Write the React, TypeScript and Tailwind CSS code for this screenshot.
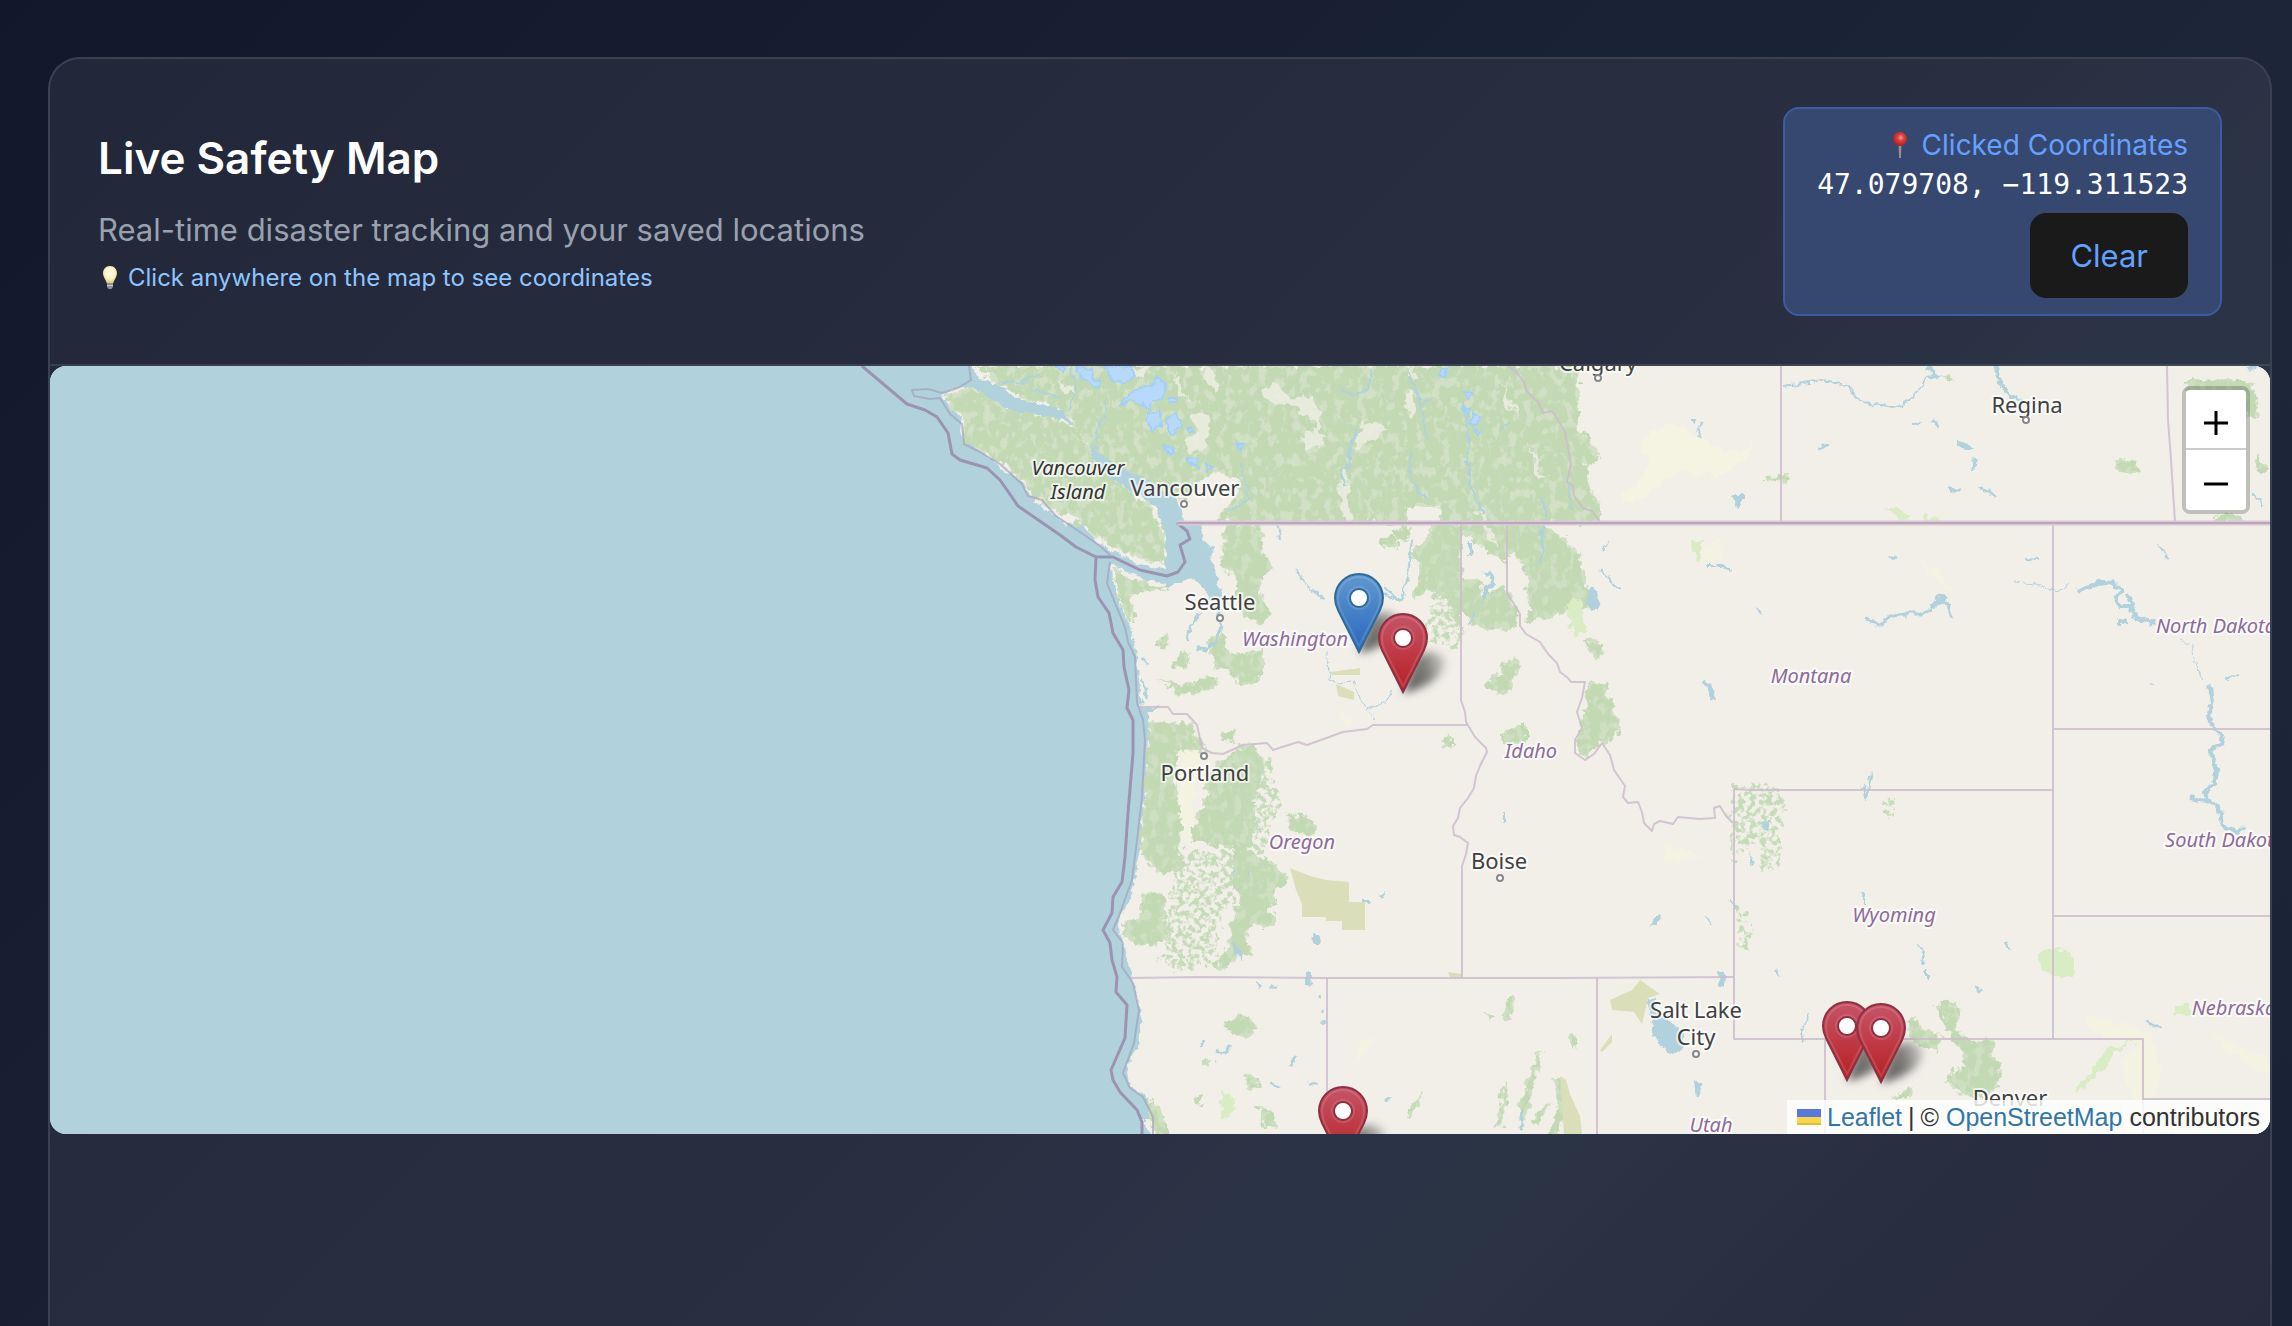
import React from "react";

type Label = { x: number; y: number; text: string };

const CITIES: (Label & { dot?: [number, number] })[] = [
  { x: 1185, y: 496, text: "Vancouver", dot: [1184, 504] },
  { x: 1220, y: 610, text: "Seattle", dot: [1220, 618] },
  { x: 1598, y: 371, text: "Calgary", dot: [1598, 378] },
  { x: 2027, y: 413, text: "Regina", dot: [2026, 420] },
  { x: 1205, y: 781, text: "Portland", dot: [1204, 756] },
  { x: 1499, y: 869, text: "Boise", dot: [1500, 878] },
  { x: 1696, y: 1018, text: "Salt Lake" },
  { x: 1696, y: 1045, text: "City", dot: [1696, 1054] },
  { x: 2010, y: 1106, text: "Denver" },
];

const STATES: Label[] = [
  { x: 1295, y: 646, text: "Washington" },
  { x: 1811, y: 683, text: "Montana" },
  { x: 2216, y: 633, text: "North Dakota" },
  { x: 2225, y: 847, text: "South Dakota" },
  { x: 1531, y: 758, text: "Idaho" },
  { x: 1302, y: 849, text: "Oregon" },
  { x: 1894, y: 922, text: "Wyoming" },
  { x: 1711, y: 1132, text: "Utah" },
  { x: 2234, y: 1015, text: "Nebraska" },
];

const MAINLAND =
  "M972 366 980 380 1000 385 1012 396 1024 400 1045 404 1062 410 1074 424 1086 440 1098 458 1112 470 1128 482 1150 496 1172 504 1180 514 1184 522 1200 524 1203 540 1212 552 1208 570 1212 584 1222 596 1210 600 1200 584 1190 578 1170 586 1148 580 1128 572 1112 564 1113 580 1117 597 1124 612 1130 627 1134 642 1137 657 1139 680 1142 708 1160 706 1148 714 1148 730 1147 767 1143 810 1140 847 1136 868 1133 887 1128 902 1122 917 1119 930 1125 947 1128 962 1131 975 1135 987 1138 1000 1141 1013 1138 1047 1130 1060 1126 1073 1128 1084 1136 1090 1147 1098 1153 1112 1154 1134H2270V366Z";

const ISLAND =
  "M940 396 956 388 972 386 988 398 1004 408 1022 414 1056 418 1080 430 1092 452 1104 470 1118 484 1140 496 1156 508 1164 530 1166 550 1165 568 1150 567 1130 560 1110 551 1094 540 1086 528 1076 522 1066 526 1052 512 1040 506 1028 494 1024 484 1014 476 1002 470 994 460 980 450 966 444 962 434 963 420 952 408Z";

const NORTH_WOODS = [
  "M944 396 970 388 990 400 1022 414 1056 419 1080 432 1096 460 1118 485 1150 505 1162 530 1164 562 1130 555 1100 540 1076 518 1052 508 1026 488 1010 470 984 450 966 440 962 420Z",
  "M976 366H1578V432L1588 434 1600 455 1585 467 1590 490 1600 503V522H1440V506H1405V522H1215L1235 500 1240 480 1215 470 1180 500 1130 482 1098 456 1074 424 1062 408 1020 398Z",
];

const FORESTS = [
  // Washington
  "M1223 524 1260 526 1263 557 1272 565 1257 590 1270 613 1262 622 1242 616 1236 576 1222 566Z",
  "M1114 568 1130 578 1150 584 1170 590 1140 590 1128 600 1136 616 1128 622 1120 600Z",
  "M1180 652 1190 655 1186 670 1174 664ZM1208 640 1222 632 1228 655 1262 650 1260 680 1240 686 1226 666 1216 670ZM1160 635 1168 633 1166 648 1157 648ZM1156 680 1178 688 1206 676 1218 680 1212 690 1180 694Z",
  "M1396 530 1408 526 1408 540 1396 538ZM1380 538 1396 538 1396 548 1382 548Z",
  "M1433 524H1461V640L1455 620 1448 600 1430 590 1414 600 1420 570 1412 550 1428 540Z",
  "M1461 524H1507V562L1490 554 1484 545 1474 544 1474 534 1461 534Z",
  "M1507 524H1540L1560 537 1576 550 1582 570 1588 590 1592 610 1572 606 1556 618 1538 616 1530 606 1527 590 1532 582 1522 560 1507 552Z",
  "M1461 582 1478 580 1482 600 1500 588 1507 594 1516 606 1520 620 1512 630 1486 628 1474 622 1461 610ZM1526 612 1534 612 1532 622 1524 620Z",
  "M1487 680 1502 676 1504 664 1516 658 1518 664 1510 680 1512 692 1496 694 1488 686Z",
  // Idaho and the Montana border
  "M1589 682 1608 682 1610 702 1620 728 1612 740 1600 742 1586 758 1576 752 1582 722Z",
  "M1503 735 1510 728 1526 728 1526 740 1514 745 1503 742ZM1443 740 1450 738 1450 746 1442 744Z",
  "M1586 640 1598 642 1603 650 1598 660 1590 650Z",
  // Oregon
  "M1148 722 1190 724 1198 740 1206 752 1176 750 1176 790 1182 820 1178 850 1182 868 1166 874 1146 862 1140 845 1145 800Z",
  "M1228 756 1248 746 1264 760 1262 780 1254 800 1254 830 1248 850 1268 862 1290 876 1274 890 1274 904 1264 908 1274 914 1274 926 1256 926 1240 930 1240 900 1232 880 1236 846 1218 846 1190 838 1196 820 1204 806 1208 780Z",
  "M1144 892 1166 896 1164 920 1170 942 1146 946 1130 940 1124 924 1142 914Z",
  "M1288 818 1302 816 1318 824 1316 836 1304 836 1290 826ZM1222 730 1236 734 1234 740 1220 738Z",
  "M1236 908 1244 908 1246 940 1252 956 1240 950 1222 970 1214 968 1228 946Z",
  // Northern California
  "M1226 1024 1240 1012 1252 1022 1256 1030 1246 1038 1228 1030ZM1202 1060 1214 1060 1204 1068ZM1244 1074 1264 1082 1254 1088 1246 1084ZM1258 1106 1268 1108 1276 1126 1262 1124ZM1196 1096 1204 1094 1200 1106 1194 1104ZM1148 1098 1158 1110 1170 1134H1156Z",
  // Nevada and Utah ranges
  "M1508 998 1514 998 1512 1020 1506 1018ZM1484 1012 1498 1020 1490 1020ZM1536 1060 1542 1050 1532 1090 1524 1124 1520 1100ZM1408 1110 1424 1092 1426 1088 1418 1104 1408 1120ZM1502 1090 1506 1084 1504 1120 1496 1130ZM1554 1080 1562 1076 1566 1100 1560 1134H1550L1560 1104ZM1544 1106 1550 1100 1540 1124 1532 1122ZM1570 1034 1576 1036 1573 1050Z",
  // Colorado Rockies
  "M1936 1004 1956 1002 1960 1014 1956 1030 1964 1038 1972 1042 1992 1040 1994 1048 1990 1056 2000 1064 1998 1084 1990 1096H1968L1944 1082 1950 1072 1966 1068 1964 1054 1952 1040Z",
  "M1908 1020 1918 1020 1920 1030 1940 1034 1938 1048 1924 1050 1920 1040 1910 1038ZM1893 1098 1912 1086 1908 1098Z",
  // Saskatchewan and Manitoba
  "M2186 380 2240 380 2252 386 2258 416 2248 418 2240 396 2190 392ZM2216 518 2228 514 2242 518 2240 522H2216ZM2256 458 2268 466 2266 474 2256 470ZM2118 462 2138 462 2138 472 2120 472ZM1942 376 1950 374 1950 382ZM1766 476 1790 478 1788 481 1766 479Z",
];

const SPARSE_WOODS =
  "M1180 850 1234 850 1236 900 1220 910 1216 960 1180 975 1160 960 1170 900ZM1450 540 1461 640 1455 650 1420 640ZM1235 740 1272 760 1280 800 1262 860 1250 840ZM1732 783 1742 786 1780 788 1786 806 1780 826 1780 868 1758 870 1762 850 1740 846 1738 862 1730 858ZM1736 908 1746 912 1750 935 1748 952 1740 948ZM1884 800 1896 798 1896 816 1888 820Z";

const CLEARINGS =
  "M1262 392 1272 380 1290 396 1312 398 1322 412 1316 430 1326 438 1310 452 1304 446 1314 420 1296 408 1272 404ZM1208 366 1222 384 1216 392 1204 376ZM1346 462 1350 520H1342L1340 480ZM1362 424 1356 446 1378 436 1386 430 1374 420ZM1300 440 1322 436 1328 444 1306 452ZM1408 390 1416 400 1414 418 1404 404ZM1412 366 1418 380 1410 376ZM1480 508 1498 548 1490 540 1476 512ZM1184 440 1200 430 1190 410 1210 420 1206 450 1190 456ZM1060 380 1076 392 1062 392ZM1176 374 1190 400 1180 398ZM1500 380 1520 420 1510 410ZM1530 440 1546 480 1536 470ZM1130 370 1150 366 1142 378Z";

const MEADOWS =
  "M1568 602 1582 598 1586 620 1586 636 1574 634 1568 618ZM1886 508 1898 508 1910 518 1910 522 1900 520ZM1926 512 1940 520V523H1926ZM2040 952 2048 946 2068 948 2072 960 2072 976H2050L2041 966ZM2173 1004 2190 1006 2190 1016H2173ZM1693 540 1702 538 1700 558 1694 554ZM2074 1086 2096 1066 2108 1050 2136 1041 2110 1056 2098 1076 2078 1092ZM1222 1090 1232 1094 1236 1110 1222 1120Z";

const SCRUB =
  "M1290 868 1310 876 1326 880 1349 882 1349 902 1365 902 1365 930 1342 930 1342 921 1326 921 1326 917 1302 917 1302 904 1296 890ZM1610 1000 1632 990 1640 980 1660 994 1648 998 1642 1024 1634 1012 1612 1010ZM1600 1050 1612 1034 1612 1042 1602 1052ZM1330 672 1360 668 1360 675 1332 675ZM1336 684 1354 692 1354 700 1338 696ZM1448 972 1462 974 1462 978H1450ZM1560 1076 1566 1080 1570 1094 1580 1116 1582 1134H1564Z";

const PALE =
  "M1640 440 1664 424 1700 436 1720 452 1752 446 1750 460 1722 470 1716 478 1690 472 1670 476 1640 500 1616 504 1650 468ZM1696 546 1720 544 1722 558 1704 560ZM1664 845 1690 850 1700 855 1686 858 1676 866 1664 858ZM1336 712 1352 716 1348 728ZM1180 740 1200 750 1196 790 1190 850 1176 820 1180 780ZM1354 1060 1364 1040 1372 1042 1368 1052ZM2084 1014 2120 1022 2150 1034 2160 1060 2154 1100 2140 1110 2120 1070 2134 1044 2090 1030ZM2210 1034 2250 1050 2270 1064V1074L2240 1060ZM1920 556 1940 574 1950 590 1936 580Z";

const LAKES =
  "M988 388 1010 398 1022 402 1020 412 1004 408ZM1090 444 1104 456 1126 470 1150 482 1178 498 1182 516 1172 518 1160 504 1132 490 1110 478 1092 458ZM1180 524 1196 524 1204 550 1214 546 1212 560 1220 590 1226 606 1214 596 1204 576 1196 572 1190 580 1176 578 1170 566 1184 570 1190 560 1182 546 1192 536ZM1647 1000 1656 998 1656 1012 1668 1020 1684 1034 1684 1048 1674 1056 1664 1048 1654 1036ZM1590 586 1597 590 1599 610 1592 612 1586 602ZM1694 1080 1704 1086 1696 1098ZM1718 972 1725 974 1724 987 1719 984ZM1760 822 1770 818 1770 832 1762 830ZM1955 440 1970 444 1974 450 1964 450ZM1304 974 1312 974 1311 988 1304 986ZM1232 942 1240 950 1244 962 1234 952ZM1313 934 1320 934 1318 944 1314 944ZM1656 916 1660 914 1662 920 1650 928ZM1732 494 1742 494 1742 504 1736 508ZM1691 418 1696 418 1695 426ZM2244 366H2256L2252 373ZM1750 852 1754 862 1750 866ZM1363 900H1370V903H1363ZM1378 896 1386 892 1384 898Z";

const RIVERS = [
  { d: "M1296 570 1304 584 1316 592 1324 600", w: 2 },
  { d: "M1278 524 1280 540", w: 2 },
  { d: "M1356 430 1350 450 1349 466 1340 472 1346 486", w: 3 },
  { d: "M1372 370 1368 390 1352 396 1342 390M1408 372 1420 400 1424 420 1426 440M1424 404 1430 398", w: 2 },
  { d: "M1464 400 1468 440 1468 475 1476 500 1484 512M1412 450 1410 470 1416 490 1430 500", w: 2 },
  { d: "M1542 498 1546 520 1540 536 1544 550 1540 562", w: 2 },
  { d: "M1413 540 1410 560 1406 584 1402 600 1390 598 1384 594", w: 2 },
  { d: "M1484 574 1490 572 1494 582 1486 590 1486 600M1470 540 1470 554", w: 4 },
  { d: "M1476 610 1470 624M1600 570 1612 582 1618 590M1602 552 1610 542", w: 2 },
  { d: "M1326 652 1330 680 1340 684 1352 680 1360 700 1372 716 1374 722M1366 710 1380 704 1392 690 1384 702", w: 1 },
  { d: "M1704 682 1712 692 1714 700", w: 4 },
  { d: "M1784 386 1822 380 1846 385 1862 402 1878 404 1896 408 1912 398 1920 388 1926 378 1938 374 1928 366", w: 2 },
  { d: "M1926 368 1940 378M1996 366 2000 384 2010 396 2022 400", w: 3 },
  { d: "M1975 458 1974 472M1980 488 1990 492 1996 498M1950 490H1960M1912 422 1918 424M1932 420 1938 428M1820 448 1826 444M1890 558 1896 556", w: 3 },
  { d: "M1866 618 1876 622 1878 628 1890 616 1900 614 1922 614 1932 606 1940 594 1950 610 1952 620", w: 3 },
  { d: "M1932 608 1946 596", w: 6 },
  { d: "M2076 591 2090 586 2104 582 2114 584 2122 592 2116 598 2120 606 2132 606 2134 616 2148 622 2156 624M2128 594 2132 604 2130 612M2116 622H2128", w: 4 },
  { d: "M2014 582 2036 584 2058 592 2070 584", w: 1 },
  { d: "M2180 640 2192 644 2196 664 2202 680", w: 1 },
  { d: "M2210 684 2212 704 2208 716 2212 726 2220 732 2223 744 2210 750 2216 770 2214 786 2206 790 2208 800 2220 808 2222 826M2190 798 2208 802M2222 826 2236 832 2246 826", w: 4 },
  { d: "M2225 680 2238 674M2158 544 2168 560M2254 494 2264 506M2150 684 2154 685", w: 2 },
  { d: "M1706 566 1722 566 1730 570M1756 608 1764 614M2026 559 2038 560M1698 438 1702 420", w: 2 },
  { d: "M1568 480 1572 510M1918 944 1924 952 1922 964M1926 970 1926 980M1864 892 1864 904M1808 1014 1802 1030 1804 1044M1776 970 1780 976", w: 2 },
  { d: "M1384 586 1400 602M1500 430 1510 422M1504 810 1504 822M1728 900 1736 908M1704 916 1710 924M1863 784 1866 798 1872 774", w: 2 },
  { d: "M1290 1066 1296 1056M1270 1084 1280 1088M1308 1084 1318 1084M1270 986 1278 986M1256 982 1262 988M1216 1050 1224 1054 1232 1046M1200 1048 1204 1040M1320 994V998M1322 1010V1014M1324 1020V1024M1388 1096V1102M1522 1108V1130", w: 3 },
  { d: "M2146 1022 2162 1028M2006 942 2010 948M1976 988 1982 990M1262 800V802M1234 870V874M1248 872V876", w: 3 },
  { d: "M1200 612 1190 628 1188 640M1216 606 1220 622 1218 640 1206 650 1196 648M1142 658 1148 664M1142 678 1147 690 1146 700", w: 3 },
];

const GLACIERS =
  "M1056 366 1066 366 1062 372ZM1076 366 1092 370 1094 378 1102 382 1098 388 1090 384 1080 376ZM1104 366 1130 368 1136 376 1124 384 1112 380ZM1120 402 1132 392 1140 386 1152 388 1156 378 1166 384 1162 398 1154 402 1150 410 1142 404 1130 400 1120 406ZM1146 414 1160 410 1160 426 1152 430 1146 420ZM1168 418 1176 412 1182 426 1174 434 1168 430ZM1164 446 1174 448 1170 456ZM1188 458 1198 460 1198 468 1190 464ZM1206 462 1212 468 1208 472ZM1170 398H1176V402H1170ZM1188 428H1192V432H1188ZM1236 444 1244 446 1240 450ZM1438 374 1448 368 1446 378ZM1462 392 1472 394 1470 400ZM1464 408 1470 410 1468 414ZM1474 414 1480 418 1474 426 1470 422ZM1474 430 1481 432 1478 435Z";

const BORDERS = [
  "M1781 366V522",
  "M2167 366 2168 420 2171 460 2175 522",
  "M1508 366 1516 372 1524 382 1527 392 1538 402 1543 413 1552 411 1558 420 1565 432 1568 448 1571 464 1567 482 1573 486 1574 496 1583 508 1592 511 1600 522",
  "M1461 523V700L1465 712 1466 722 1475 737 1486 748 1487 752 1480 766 1476 776 1474 788 1468 798 1460 808 1458 818 1453 826 1454 835 1460 837 1468 843 1466 854 1462 866V977",
  "M1507 523V593L1514 604 1520 614 1520 626 1526 634 1540 642 1548 654 1557 663 1560 672 1568 678 1571 682 1585 682 1582 698 1577 712 1582 728 1575 740 1575 753 1585 760 1594 754 1602 743 1610 755 1614 770 1625 786 1623 797 1628 803 1638 802 1642 812 1644 823 1652 831 1654 824 1660 821 1673 824 1678 817 1700 819 1715 818 1714 808 1720 806 1726 816 1733 823",
  "M1140 707 1168 707 1173 714 1187 714 1197 725 1202 748 1212 753 1223 754 1243 745 1267 743 1273 750 1298 742 1307 745 1343 732 1367 729 1373 725H1467",
  "M1131 978 1200 977 1320 978 1560 978 1734 977",
  "M1327 978V1134M1597 978V1134",
  "M1734 789V1039H2143V1134M1734 789 1750 790 2053 790M1825 1039V1134",
  "M2053 523V1039M2053 729H2270M2053 916H2270M2143 1099H2270",
];

const OFFSHORE =
  "M862 366 907 404 925 410 937 417 948 433 952 454 960 460 987 468 1000 480 1018 506 1060 535 1076 547 1096 557 1113 557 1140 570 1167 576 1178 572 1185 562 1180 545 1190 539 1187 531 1177 523M1096 557 1095 580 1098 597 1109 613 1113 633 1123 650 1124 667 1129 690 1127 708 1133 720V753L1128 813 1125 857 1122 882 1113 897 1112 913 1103 930 1110 943 1112 960 1117 977 1116 992 1127 1005 1125 1038 1111 1070 1113 1080 1120 1092 1137 1110 1142 1122V1134";

const INSHORE =
  "M969 366 971 380 958 388 942 393 928 389 912 390 914 396 930 399 940 398 950 414 962 424 964 444 980 452 1000 464 1022 484 1028 496 1042 500 1056 516 1080 532 1100 546 1110 555M1110 562 1107 583 1115 603 1125 627 1128 642 1135 657 1137 703 1143 720 1145 740 1142 797 1137 840 1132 880 1120 913 1113 930 1123 943 1122 967 1133 983 1139 1010 1134 1043 1123 1073 1130 1088 1143 1097 1153 1117V1134";

function Pin({ x, y, tone }: { x: number; y: number; tone: "blue" | "red" }) {
  const edge = tone === "blue" ? "#2e6c97" : "#8f2f41";
  return (
    <g transform={`translate(${x} ${y})`}>
      <path
        d="M0 -1 -21 -43C-23 -47 -24 -51 -24 -55A24 24 0 0 1 24 -55C24 -51 23 -47 21 -43Z"
        fill={tone === "blue" ? "url(#pinBlue)" : "url(#pinRed)"}
        stroke={edge}
        strokeWidth="2"
      />
      <path
        d="M0 -7 -19 -44C-20 -48 -21 -51 -21 -55A21 21 0 0 1 21 -55C21 -51 20 -48 19 -44Z"
        fill="none"
        stroke="#fff"
        strokeOpacity="0.13"
        strokeWidth="2"
      />
      <circle cx="0" cy="-55" r="11" fill="none" stroke="#fff" strokeOpacity="0.12" strokeWidth="2" />
      <circle cx="0" cy="-55" r="9" fill="#fff" stroke={edge} strokeWidth="2" />
    </g>
  );
}

function PinShadow({ x, y }: { x: number; y: number }) {
  return (
    <path
      transform={`translate(${x} ${y})`}
      d="M0 0 12 -34C22 -46 44 -42 42 -28 38 -14 20 -4 0 0Z"
      fill="url(#shade)"
      filter="url(#soft)"
    />
  );
}

const PINS: { x: number; y: number; tone: "blue" | "red" }[] = [
  { x: 1359, y: 653, tone: "blue" },
  { x: 1403, y: 693, tone: "red" },
  { x: 1847, y: 1081, tone: "red" },
  { x: 1881, y: 1083, tone: "red" },
  { x: 1343, y: 1166, tone: "red" },
];

function MapCanvas() {
  return (
    <svg
      viewBox="50 366 2220 768"
      preserveAspectRatio="xMidYMid slice"
      className="block h-full w-full font-['Noto_Sans',sans-serif]"
      role="img"
      aria-label="Map of the north-western United States"
    >
      <defs>
        <linearGradient id="pinBlue" x1="0" y1="0" x2="0" y2="1">
          <stop offset="0" stopColor="#6099cf" />
          <stop offset="1" stopColor="#2a66bd" />
        </linearGradient>
        <linearGradient id="pinRed" x1="0" y1="0" x2="0" y2="1">
          <stop offset="0" stopColor="#c65468" />
          <stop offset="1" stopColor="#b71f22" />
        </linearGradient>
        <linearGradient id="shade" x1="0" y1="0.6" x2="1" y2="0.3">
          <stop offset="0" stopColor="#000" stopOpacity="0.6" />
          <stop offset="0.5" stopColor="#000" stopOpacity="0.5" />
          <stop offset="1" stopColor="#000" stopOpacity="0.15" />
        </linearGradient>
        <filter id="soft" x="-50%" y="-50%" width="200%" height="200%">
          <feGaussianBlur stdDeviation="4" />
        </filter>
        <filter id="ragged" filterUnits="userSpaceOnUse" x="850" y="366" width="1420" height="768">
          <feTurbulence type="fractalNoise" baseFrequency="0.09" numOctaves="3" seed="4" result="n" />
          <feDisplacementMap in="SourceGraphic" in2="n" scale="14" xChannelSelector="R" yChannelSelector="G" />
        </filter>
        <filter id="coast" filterUnits="userSpaceOnUse" x="850" y="360" width="1430" height="780">
          <feTurbulence type="fractalNoise" baseFrequency="0.12" numOctaves="3" seed="9" result="n" />
          <feDisplacementMap in="SourceGraphic" in2="n" scale="8" xChannelSelector="R" yChannelSelector="G" />
        </filter>
        <filter id="woods" filterUnits="userSpaceOnUse" x="850" y="366" width="1420" height="768">
          <feTurbulence type="fractalNoise" baseFrequency="0.1" numOctaves="4" seed="7" result="n" />
          <feDisplacementMap in="SourceGraphic" in2="n" scale="16" xChannelSelector="R" yChannelSelector="G" result="shape" />
          <feTurbulence type="fractalNoise" baseFrequency="0.12 0.09" numOctaves="4" seed="12" result="m" />
          <feColorMatrix in="m" type="matrix" values="0 0 0 0 0  0 0 0 0 0  0 0 0 0 0  7 0 0 0 -2.4" result="holes" />
          <feComposite in="shape" in2="holes" operator="in" />
        </filter>
        <filter id="sparse" filterUnits="userSpaceOnUse" x="850" y="366" width="1420" height="768">
          <feTurbulence type="fractalNoise" baseFrequency="0.1" numOctaves="4" seed="3" result="n" />
          <feDisplacementMap in="SourceGraphic" in2="n" scale="16" xChannelSelector="R" yChannelSelector="G" result="shape" />
          <feTurbulence type="fractalNoise" baseFrequency="0.18" numOctaves="3" seed="21" result="m" />
          <feColorMatrix in="m" type="matrix" values="0 0 0 0 0  0 0 0 0 0  0 0 0 0 0  6 0 0 0 -2.6" result="holes" />
          <feComposite in="shape" in2="holes" operator="in" />
        </filter>
        <clipPath id="frame">
          <rect x="50" y="366" width="2220" height="768" />
        </clipPath>
      </defs>
      <g clipPath="url(#frame)">
        <rect x="50" y="366" width="2220" height="768" fill="#b1d2dd" />
        <g fill="#f2efe9" filter="url(#coast)">
          <path d={MAINLAND} />
          <path d={ISLAND} />
          <path d="M1140 1120 2280 1120V1140H1156Z" />
          <path d="M2255 360H2290V1140H2255Z" />
          <path d="M968 352H2280V372H974Z" />
        </g>
        <path d={PALE} fill="#f5f5e0" opacity="0.8" filter="url(#ragged)" />
        <g filter="url(#ragged)">
          <path d={NORTH_WOODS.join("")} fill="#d2e1c6" />
          <path d={FORESTS.join("")} fill="#cfdfc2" />
        </g>
        <path d={NORTH_WOODS.join("") + FORESTS.join("")} fill="#c2d9b4" filter="url(#woods)" />
        <path d={CLEARINGS} fill="#eeeee2" opacity="0.85" filter="url(#ragged)" />
        <path d={SPARSE_WOODS} fill="#c6dbb9" filter="url(#sparse)" />
        <path d={MEADOWS} fill="#d9ecc4" filter="url(#ragged)" />
        <path d={SCRUB} fill="#dadfb9" />
        <path d={LAKES} fill="#b1d2dd" filter="url(#coast)" />
        <g fill="none" stroke="#b1d2dd" strokeLinejoin="round" filter="url(#coast)">
          {RIVERS.map((r) => (
            <path key={r.d} d={r.d} strokeWidth={r.w} />
          ))}
          <path
            d="M1070 366 1076 390 1068 410M1104 400 1106 416 1096 430 1098 450M1040 374 1020 384 1000 380M1030 390 1060 396M1240 462 1246 480 1248 500 1228 512"
            strokeWidth="2"
          />
        </g>
        <path d={GLACIERS} fill="#b9d9fb" stroke="#a3cffb" strokeWidth="2" filter="url(#coast)" />
        <g fill="none" strokeLinejoin="round">
          <path d={INSHORE} stroke="#a09ebb" strokeOpacity="0.65" strokeWidth="2" />
          <path d={OFFSHORE} stroke="#9c93b3" strokeWidth="3" />
          {BORDERS.map((d) => (
            <path key={d} d={d} stroke="#cdbccd" strokeOpacity="0.85" strokeWidth="2" />
          ))}
          <path d="M1177 523H2270" stroke="#d9c9d6" strokeWidth="5" />
          <path d="M1177 523H2270" stroke="#bba5bd" strokeWidth="2" />
        </g>
        <g fontSize="22" fill="#414141" stroke="#fff" strokeOpacity="0.7" strokeWidth="4" strokeLinejoin="round" paintOrder="stroke" textAnchor="middle">
          {CITIES.map((c) => (
            <text key={c.text} x={c.x} y={c.y}>
              {c.text}
            </text>
          ))}
        </g>
        {CITIES.map(
          (c) =>
            c.dot && (
              <circle key={c.text} cx={c.dot[0]} cy={c.dot[1]} r="3" fill="#fff" stroke="#888" strokeWidth="2" />
            ),
        )}
        <g fontSize="20" fontStyle="italic" stroke="#fff" strokeOpacity="0.7" strokeWidth="4" strokeLinejoin="round" paintOrder="stroke" textAnchor="middle">
          <text x="1078" y="475" fill="#333">
            Vancouver
          </text>
          <text x="1078" y="499" fill="#333">
            Island
          </text>
          {STATES.map((s) => (
            <text key={s.text} x={s.x} y={s.y} fill="#8d6b98">
              {s.text}
            </text>
          ))}
        </g>
        {PINS.map((p) => (
          <PinShadow key={p.x} x={p.x} y={p.y} />
        ))}
        {PINS.map((p) => (
          <Pin key={p.x} {...p} />
        ))}
      </g>
    </svg>
  );
}

function BulbIcon() {
  return (
    <svg viewBox="0 0 24 24" className="size-6 shrink-0" aria-hidden="true">
      <defs>
        <radialGradient id="bulbGlow" cx="0.5" cy="0.4" r="0.6">
          <stop offset="0" stopColor="#fffef2" />
          <stop offset="0.6" stopColor="#fdf3c0" />
          <stop offset="1" stopColor="#dcc274" />
        </radialGradient>
      </defs>
      <path d="M12 0C7.600 0 5 3.300 5 7.200c0 3.600 2.800 6.300 3.800 10.300h6.400C16.200 13.500 19 10.800 19 7.200 19 3.300 16.400 0 12 0z" fill="url(#bulbGlow)" />
      <path d="M9 17h6v4l-1.500 2h-3L9 21z" fill="#8e8f94" />
      <path d="M9 19.500h6" stroke="#c9cacd" strokeWidth="1" />
    </svg>
  );
}

function PushpinIcon() {
  return (
    <svg viewBox="0 0 28 28" className="size-7 shrink-0" aria-hidden="true">
      <defs>
        <radialGradient id="pinHead" cx="0.55" cy="0.4" r="0.6">
          <stop offset="0" stopColor="#f49a92" />
          <stop offset="0.4" stopColor="#dd3f3b" />
          <stop offset="1" stopColor="#a81f26" />
        </radialGradient>
      </defs>
      <path d="M12.500 13h3l-.6 14h-1.800z" fill="#9a8f90" />
      <circle cx="14" cy="8" r="7" fill="url(#pinHead)" />
    </svg>
  );
}

export default function App() {
  return (
    <main className="flex min-h-screen flex-col bg-[linear-gradient(135deg,#12182b_0px,#1e273a_1850px,#12182b_3700px)] pt-[57px] pr-5 pl-12 font-['Inter',sans-serif]">
      <section className="flex flex-1 flex-col rounded-t-[32px] border-2 border-b-0 border-[#3a4152] bg-[linear-gradient(135deg,#22273a_0px,#2a2e41_1410px,#2b3446_1660px,#2b3445_1835px,#2a2e41_2080px,#272b3d_2500px)]">
        <header className="flex items-center justify-between border-b-2 border-white/10 p-12">
          <div>
            <h1 className="text-[44px] leading-[64px] font-semibold text-white">Live Safety Map</h1>
            <p className="mt-3 text-[31px] leading-[56px] text-[#99a1af]">Real-time disaster tracking and your saved locations</p>
            <p className="flex items-center gap-[6px] text-2xl leading-10 text-[#8ec5ff]">
              <BulbIcon />
              Click anywhere on the map to see coordinates
            </p>
          </div>
          <div className="rounded-2xl border-2 border-[#3b5ba5] bg-[#36486f] px-8 py-4 text-right">
            <p className="flex items-center justify-end gap-2 text-[28px] leading-10 text-[#64a0ff]">
              <PushpinIcon />
              Clicked Coordinates
            </p>
            <p className="font-['DejaVu_Sans_Mono',monospace] text-[28px] leading-10 text-white">47.079708, −119.311523</p>
            <button type="button" className="mt-2 rounded-2xl bg-[#1a1a1a] px-10 py-5 text-[31px] leading-[45px] text-[#64a0ff]">
              Clear
            </button>
          </div>
        </header>

        <div className="relative h-[768px] overflow-hidden rounded-2xl bg-[#b1d2dd]">
          <MapCanvas />
          <div className="absolute top-5 right-5 flex flex-col overflow-hidden rounded-lg border-4 border-black/20 bg-clip-padding">
            <button type="button" aria-label="Zoom in" className="flex size-15 items-center justify-center border-b-2 border-[#ccc] bg-white pt-2">
              <svg viewBox="0 0 24 24" className="size-6" stroke="#000" strokeWidth="3" aria-hidden="true">
                <path d="M0 12H24M12 0V24" />
              </svg>
            </button>
            <button type="button" aria-label="Zoom out" className="flex size-15 items-center justify-center bg-white pt-2">
              <svg viewBox="0 0 24 24" className="size-6" stroke="#000" strokeWidth="3" aria-hidden="true">
                <path d="M0 12H24" />
              </svg>
            </button>
          </div>
          <div className="absolute right-0 bottom-0 flex items-center gap-[6px] bg-white/80 px-[10px] font-['Liberation_Sans',sans-serif] text-[25px] leading-[34px] text-[#333]">
            <a href="https://leafletjs.com" className="flex items-center gap-[6px] text-[#3276a8]">
              <svg viewBox="0 0 12 8" className="h-4 w-6" aria-hidden="true">
                <path fill="#5579dc" d="M0 0h12v4H0z" />
                <path fill="#f9d648" d="M0 4h12v3H0z" />
                <path fill="#dcbc38" d="M0 7h12v1H0z" />
              </svg>
              Leaflet
            </a>
            <span>|</span>
            <span>
              © <a href="https://www.openstreetmap.org/copyright" className="text-[#3276a8]">OpenStreetMap</a> contributors
            </span>
          </div>
        </div>
      </section>
    </main>
  );
}
